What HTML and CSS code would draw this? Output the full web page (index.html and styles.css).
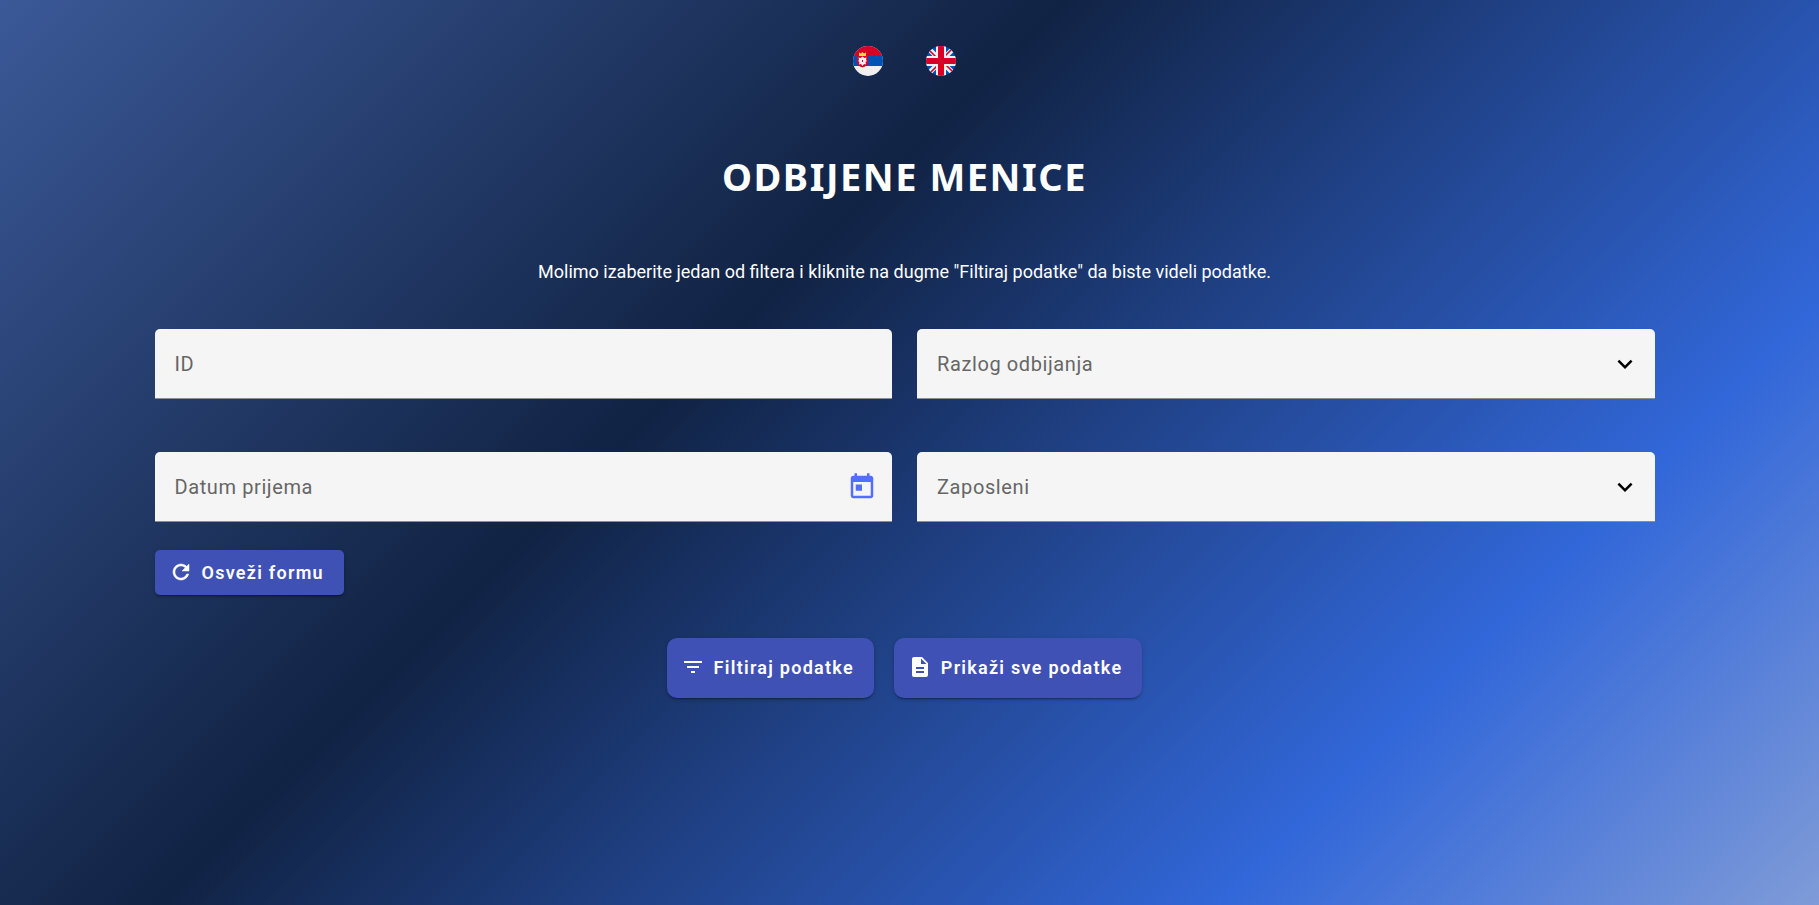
FILE: index.html
```html
<!DOCTYPE html>
<html lang="sr-Latn">
<head>
<meta charset="utf-8">
<meta name="viewport" content="width=device-width, initial-scale=1">
<title>Odbijene menice</title>
<link rel="stylesheet" href="styles.css">
</head>
<body>
<main class="page">
  <nav class="languages" aria-label="Jezik">
    <button class="flag" type="button" aria-label="Srpski">
      <svg viewBox="0 0 30 30" aria-hidden="true">
        <clipPath id="round"><circle cx="15" cy="15" r="15"/></clipPath>
        <g clip-path="url(#round)">
          <path fill="#f0f0f0" d="M0 0h30v30H0z"/>
          <path fill="#0052b4" d="M0 10h30v10H0z"/>
          <path fill="#d80027" d="M0 0h30v10H0z"/>
          <path fill="#d80027" d="M4 10h11v6c0 3-2.500 4.500-5.500 5.500C6.500 20.500 4 19 4 16z"/>
          <path fill="#ffda44" d="M6 6.500l2 1L9.500 6 11 7.500l2-1V10H6z"/>
          <path fill="#f0f0f0" d="M5.500 11.500l2 .5 2-1.500 2 1.500 2-.5-.5 2.500 1 1-1.500 1 .5 2.500-2-.5L9.500 20 8 18l-2 .5.500-2.500-1.500-1 1-1z"/>
          <path fill="#d80027" d="M9 14h1v2H9z"/>
        </g>
      </svg>
    </button>
    <button class="flag" type="button" aria-label="English">
      <svg viewBox="0 0 30 30" aria-hidden="true">
        <clipPath id="disc"><circle cx="15" cy="15" r="15"/></clipPath>
        <g clip-path="url(#disc)">
          <path fill="#0052b4" d="M0 0h30v30H0z"/>
          <path stroke="#f0f0f0" stroke-width="5" d="M0 0l30 30M30 0L0 30"/>
          <path stroke="#d80027" stroke-width="1.600" d="M1 2l10 10M28 1L18 11M29 28L19 18M2 29l10-10"/>
          <path stroke="#f0f0f0" stroke-width="10" d="M15 0v30M0 15h30"/>
          <path stroke="#d80027" stroke-width="6" d="M15 0v30M0 15h30"/>
        </g>
      </svg>
    </button>
  </nav>

  <h1 class="title">ODBIJENE MENICE</h1>
  <p class="hint">Molimo izaberite jedan od filtera i kliknite na dugme "Filtiraj podatke" da biste videli podatke.</p>

  <form class="filters">
    <div class="fields">
      <div class="field">
        <input class="control" id="bill-id" type="text">
        <label class="label" for="bill-id">ID</label>
      </div>
      <div class="field">
        <select class="control" id="reason"><option value=""></option></select>
        <label class="label" for="reason">Razlog odbijanja</label>
        <svg class="chevron" viewBox="0 0 24 24" aria-hidden="true"><path d="M16.590 8.590L12 13.170 7.410 8.590 6 10l6 6 6-6z"/></svg>
      </div>
      <div class="field">
        <input class="control" id="received" type="text">
        <label class="label" for="received">Datum prijema</label>
        <button class="picker" type="button" aria-label="Otvori kalendar">
          <svg viewBox="0 0 24 24" aria-hidden="true"><path d="M19 3h-1V1h-2v2H8V1H6v2H5c-1.110 0-1.990.9-1.990 2L3 19c0 1.100.890 2 2 2h14c1.100 0 2-.9 2-2V5c0-1.100-.9-2-2-2zm0 16H5V8h14v11zM7 10h5v5H7z"/></svg>
        </button>
      </div>
      <div class="field">
        <select class="control" id="employee"><option value=""></option></select>
        <label class="label" for="employee">Zaposleni</label>
        <svg class="chevron" viewBox="0 0 24 24" aria-hidden="true"><path d="M16.590 8.590L12 13.170 7.410 8.590 6 10l6 6 6-6z"/></svg>
      </div>
    </div>

    <button class="button" type="reset">
      <svg class="icon" viewBox="0 0 24 24" aria-hidden="true"><path stroke="currentColor" stroke-width=".5" d="M17.650 6.350C16.200 4.900 14.210 4 12 4c-4.420 0-7.990 3.580-7.990 8s3.570 8 7.990 8c3.730 0 6.840-2.550 7.730-6h-2.080c-.820 2.330-3.040 4-5.650 4-3.310 0-6-2.690-6-6s2.690-6 6-6c1.660 0 3.140.690 4.220 1.780L13 11h7V4l-2.350 2.350z"/></svg>
      Osveži formu
    </button>

    <div class="actions">
      <button class="button button-large" type="button">
        <svg class="icon" viewBox="0 0 24 24" aria-hidden="true"><path d="M10 18h4v-2h-4v2zM3 6v2h18V6H3zm3 7h12v-2H6v2z"/></svg>
        Filtiraj podatke
      </button>
      <button class="button button-large" type="button">
        <svg class="icon" viewBox="0 0 24 24" aria-hidden="true"><path d="M14 2H6c-1.100 0-1.990.9-1.990 2L4 20c0 1.100.890 2 1.990 2H18c1.100 0 2-.9 2-2V8l-6-6zm2 16H8v-2h8v2zm0-4H8v-2h8v2zm-3-5V3.500L18.500 9H13z"/></svg>
        Prikaži sve podatke
      </button>
    </div>
  </form>
</main>
</body>
</html>
```
FILE: styles.css
```css
* {
  box-sizing: border-box;
}

body {
  margin: 0;
  min-height: 100vh;
  font-family: Roboto, "Liberation Sans", sans-serif;
  color: #fff;
  background: linear-gradient(135deg, #3b5998 0%, #112344 39%, #3267d9 78%, #7f9bd8 100%);
}

.page {
  display: flex;
  flex-direction: column;
  align-items: center;
  padding: 46px 26px 40px 16px;
}

.languages {
  display: flex;
  gap: 43px;
}

.flag {
  width: 30px;
  height: 30px;
  padding: 0;
  border: 0;
  border-radius: 50%;
  background: none;
  cursor: pointer;
}

.flag svg {
  display: block;
  width: 100%;
}

.title {
  margin: 75px 0 0;
  font: 700 38px/50px "Noto Sans", sans-serif;
  letter-spacing: 0.04em;
}

.hint {
  margin: 57px 0 0;
  font-size: 18px;
  line-height: 28px;
}

.filters {
  width: 100%;
  max-width: 1500px;
  margin-top: 43px;
}

.fields {
  display: grid;
  grid-template-columns: 1fr 1fr;
  gap: 53px 25px;
  margin-bottom: 28px;
}

.field {
  display: grid;
  grid-template-columns: 1fr auto;
  align-items: center;
  height: 70px;
  border-bottom: 1px solid #8e8e8e;
  border-radius: 5px 5px 0 0;
  background: #f5f5f5;
  overflow: hidden;
}

.control {
  grid-area: 1 / 1 / 2 / 3;
  width: 100%;
  height: 69px;
  padding: 0 20px;
  border: 0;
  appearance: none;
  background: none;
  font: 400 20px/28px Roboto, sans-serif;
  color: #222;
}

.label {
  grid-area: 1 / 1;
  padding-left: 20px;
  font-size: 20px;
  line-height: 28px;
  letter-spacing: 0.03em;
  color: #666;
  pointer-events: none;
}

.chevron {
  grid-area: 1 / 2;
  width: 30px;
  height: 30px;
  margin-right: 15px;
  fill: #000;
  pointer-events: none;
}

.picker {
  grid-area: 1 / 2;
  width: 30px;
  height: 30px;
  margin-right: 15px;
  padding: 0;
  border: 0;
  background: none;
  fill: #536dfe;
  cursor: pointer;
}

.picker svg {
  display: block;
}

.button {
  display: flex;
  align-items: center;
  gap: 9px;
  height: 45px;
  padding: 0 20px 0 14px;
  border: 0;
  border-radius: 5px;
  background: #3f51b5;
  box-shadow: 0 3px 1px -2px rgba(0, 0, 0, .2), 0 2px 2px rgba(0, 0, 0, .14), 0 1px 5px rgba(0, 0, 0, .12);
  font: 600 18px/28px Roboto, sans-serif;
  letter-spacing: 0.07em;
  white-space: nowrap;
  color: #fff;
  cursor: pointer;
}

.button-large {
  height: 60px;
  border-radius: 10px;
}

.icon {
  width: 24px;
  height: 24px;
  margin-bottom: 2px;
  fill: currentColor;
}

.actions {
  display: flex;
  flex-wrap: wrap;
  justify-content: center;
  gap: 20px;
  margin-top: 43px;
}
```
